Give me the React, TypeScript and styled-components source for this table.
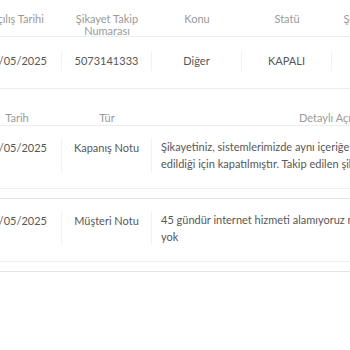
import React from "react";
import styled, { createGlobalStyle } from "styled-components";

const GlobalStyle = createGlobalStyle`
    body {
        margin: 0;
        background: #ffffff;
        font-family: Lato, "Open Sans", sans-serif;
    }
`;

type Note = { date: string; kind: string; text: string };

const summaryHead = ["Açılış Tarihi", "Şikayet Takip Numarası", "Konu", "Statü", "Şikayet Kanalı", ""];
const summaryRow = ["05/05/2025", "5073141333", "Diğer", "KAPALI", "", ""];

const notes: Note[] = [
    {
        date: "05/05/2025",
        kind: "Kapanış Notu",
        text: "Şikayetiniz, sistemlerimizde aynı içeriğe sahip başka bir şikayet kaydı tespit edildiği için kapatılmıştır. Takip edilen şikayet numarası 5073141333."
    },
    {
        date: "05/05/2025",
        kind: "Müşteri Notu",
        text: "45 gündür internet hizmeti alamıyoruz neden düzelmediğine dair hiçbir bilgi yok"
    }
];

const App: React.FunctionComponent = () => {
    return (
        <Page>
            <GlobalStyle />
            <Shift>
                <SummaryTable>
                    <SummaryHead>
                        {summaryHead.map((h, i) => (
                            <HeadCell key={i}>{h}</HeadCell>
                        ))}
                    </SummaryHead>
                    <SummaryRow>
                        {summaryRow.map((v, i) => (
                            <Cell key={i} $divider={i < 4}>
                                {v}
                            </Cell>
                        ))}
                    </SummaryRow>
                </SummaryTable>

                <NotesTable>
                    <NotesHead>
                        <HeadCell>Tarih</HeadCell>
                        <HeadCell>Tür</HeadCell>
                        <HeadCell>Detaylı Açıklama</HeadCell>
                    </NotesHead>
                    {notes.map((n, i) => (
                        <NoteWrap key={i}>
                            <NoteRow>
                                <Cell $divider>{n.date}</Cell>
                                <Cell $divider>{n.kind}</Cell>
                                <TextCell>{n.text}</TextCell>
                            </NoteRow>
                        </NoteWrap>
                    ))}
                </NotesTable>
            </Shift>
        </Page>
    );
};

const Page = styled.div`
    width: 350px;
    height: 350px;
    overflow: hidden;
    background: #ffffff;
`;

const Shift = styled.div`
    width: 640px;
    margin-left: -28px;
`;

const SummaryTable = styled.div`
    display: flex;
    flex-direction: column;
`;

const SummaryHead = styled.div`
    display: grid;
    grid-template-columns: repeat(6, 90px);
    height: 37px;
    padding-top: 13px;
    box-sizing: border-box;
    border-bottom: 1px solid #ededed;
`;

const HeadCell = styled.div`
    font-size: 11px;
    line-height: 12px;
    color: #9a9a9a;
    text-align: center;
    padding: 0 8px;
`;

const SummaryRow = styled.div`
    display: grid;
    grid-template-columns: repeat(6, 90px);
    padding: 14px 0 17px;
    border-bottom: 1px solid #ededed;
`;

const Cell = styled.div<{ $divider?: boolean }>`
    font-size: 11px;
    line-height: 20px;
    color: #575757;
    text-align: center;
    border-right: ${p => (p.$divider ? "1px solid #f2f2f2" : "none")};
`;

const NotesTable = styled.div`
    display: flex;
    flex-direction: column;
`;

const NotesHead = styled.div`
    display: grid;
    grid-template-columns: 90px 90px 374px;
    padding: 23px 0 1px;
    border-bottom: 1px solid #ededed;
`;

const NoteWrap = styled.div`
    padding-bottom: 9px;
    border-bottom: 1px solid #e6e6e6;
`;

const NoteRow = styled.div`
    display: grid;
    grid-template-columns: 90px 90px 388px;
    padding: 12px 0 16px;
    border-bottom: 1px solid #f0f0f0;
`;

const TextCell = styled.div`
    font-size: 11px;
    line-height: 17px;
    color: #575757;
    padding: 0 9px;
`;

export default App;
